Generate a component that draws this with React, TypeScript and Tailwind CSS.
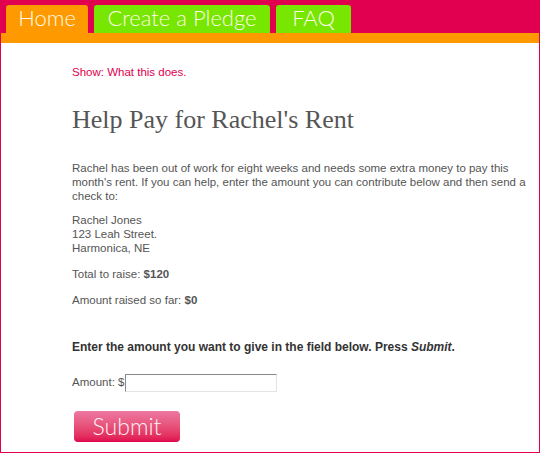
const tabs = [
  { label: 'Home', active: true, width: 'w-[82px]' },
  { label: 'Create a Pledge', active: false, width: 'w-[176px]' },
  { label: 'FAQ', active: false, width: 'w-[75px]' },
];

const App = () => {
  return (
    <div className="h-[453px] w-[540px] bg-[#e0004f] flex flex-col font-['Liberation_Sans',Arial,sans-serif]">
      {/* Nav tabs */}
      <nav className="flex gap-[6px] pl-[6px] pt-[5px] h-[33px]">
        {tabs.map((tab) => (
          <div
            key={tab.label}
            className={`${tab.width} h-[28px] rounded-t-[3px] flex items-center justify-center font-['Lato',sans-serif] font-light text-[22px] leading-none text-[#fffbe6] ${
              tab.active ? 'bg-[#ff9900]' : 'bg-[#77e600]'
            }`}
          >
            <span className="-mt-[2px]">{tab.label}</span>
          </div>
        ))}
      </nav>

      {/* Panel */}
      <div className="flex-1 mx-[1px] mb-[1px] flex flex-col">
        <div className="h-[10px] bg-[#ff9900]" />
        <main className="flex-1 bg-white pl-[71px] pr-[10px] pt-[22px] text-[11.5px] leading-[13.8px] text-[#555]">
          <a className="block text-[#e0004f] leading-[14px]">Show: What this does.</a>

          <h1 className="mt-[25px] font-['Liberation_Serif',serif] text-[26px] leading-[32px] text-[#555]">
            Help Pay for Rachel's Rent
          </h1>

          <p className="mt-[26px]">
            Rachel has been out of work for eight weeks and needs some extra money to pay this month's rent. If you can
            help, enter the amount you can contribute below and then send a check to:
          </p>

          <p className="mt-[11px]">
            Rachel Jones
            <br />
            123 Leah Street.
            <br />
            Harmonica, NE
          </p>

          <p className="mt-[12px]">
            Total to raise: <b>$120</b>
          </p>

          <p className="mt-[12px]">
            Amount raised so far: <b>$0</b>
          </p>

          <p className="mt-[34px] text-[12px] font-bold text-[#333]">
            Enter the amount you want to give in the field below. Press <i>Submit</i>.
          </p>

          <div className="mt-[19px] flex items-center">
            <span>Amount: $</span>
            <input
              type="text"
              className="ml-[1px] w-[152px] h-[18px] border border-[#8a8a8a] border-b-[#e4e4e4] border-r-[#e4e4e4] outline-none"
            />
          </div>

          <button className="mt-[19px] ml-[2px] w-[106px] h-[31px] rounded-[4px] bg-gradient-to-b from-[#ec78a2] to-[#e0004f] font-['Lato',sans-serif] font-light text-[23px] leading-none text-[#fff3f6]">
            Submit
          </button>
        </main>
      </div>
    </div>
  );
};

export default App;
